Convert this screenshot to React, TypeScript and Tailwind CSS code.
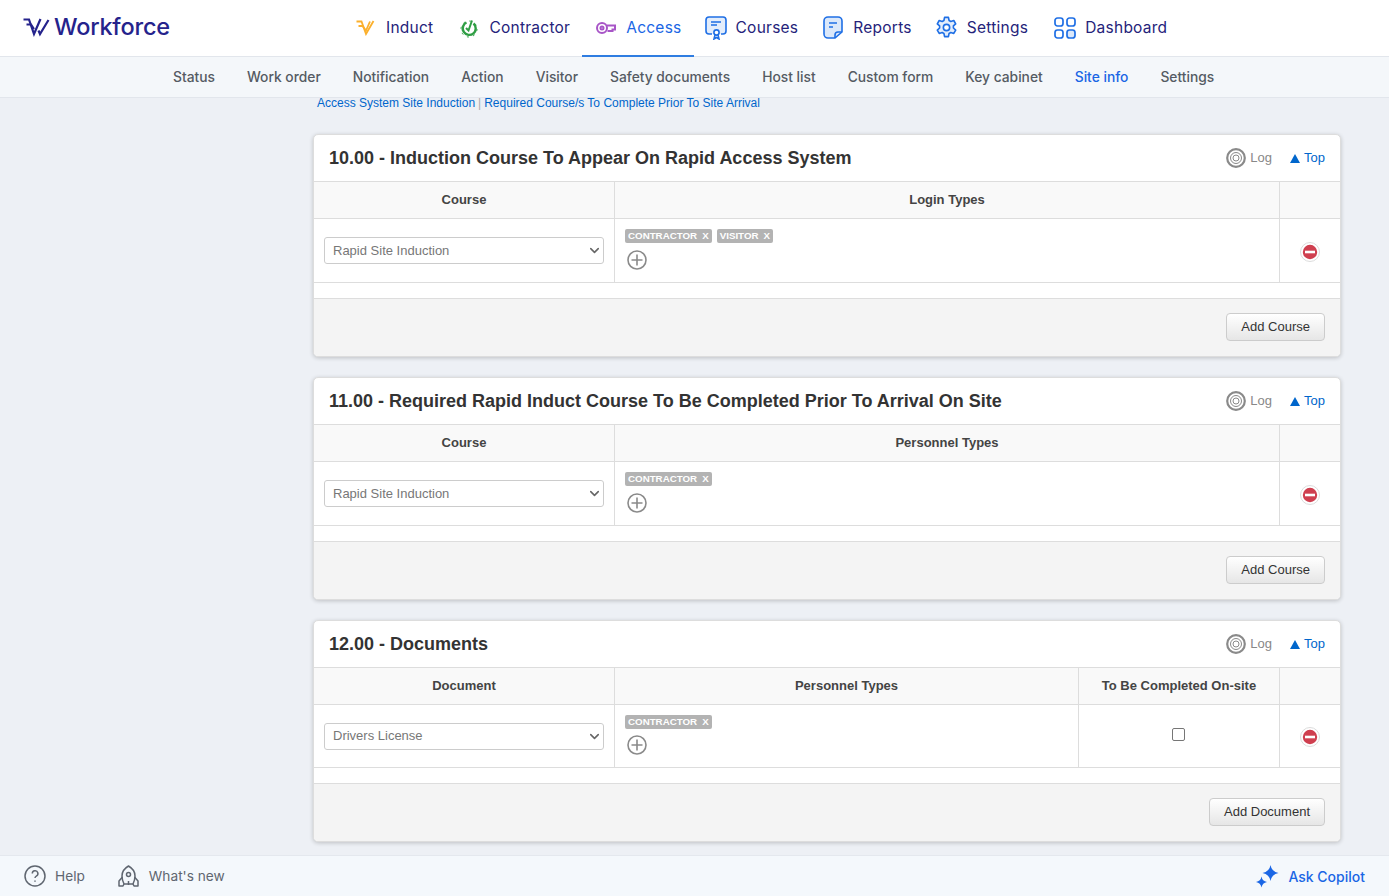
import { ReactNode } from "react";
import { ChevronDown } from "lucide-react";

const sans = "font-['Inter','Noto_Sans',sans-serif]";
const arial = "font-['Liberation_Sans',Arial,sans-serif]";

const InductIcon = () => (
  <svg width="19" height="16" viewBox="0 0 19 16" fill="none" stroke="#fbb02d" strokeWidth="1.800">
    <path d="M0.500 1.500H5.500L10 14 17.500 1" />
    <path d="M2.500 6H6.500L10 10.500 14 1.500" />
  </svg>
);

const ContractorIcon = () => (
  <svg width="20" height="20" viewBox="0 0 20 20" fill="none" stroke="#2f9e44">
    <path d="M7.500 4.500a6.500 6.500 0 1 0 7 1" strokeWidth="2.400" />
    <circle cx="10" cy="11" r="8" strokeWidth="1" strokeDasharray="2 4.300" />
    <path d="M7 10 9.500 12.500 13 2.500" strokeWidth="2" />
  </svg>
);

const AccessIcon = () => (
  <svg width="20" height="14" viewBox="0 0 20 14" fill="none" stroke="#a855c7" strokeWidth="2">
    <circle cx="6" cy="7" r="5" />
    <circle cx="6" cy="7" r="1.500" />
    <path d="M11 4.500h8v4h-2.500v1.500h-5" />
  </svg>
);

const CoursesIcon = () => (
  <svg width="22" height="24" viewBox="0 0 22 24" fill="none" stroke="#1f6fe5" strokeWidth="1.600">
    <path d="M7 18H4a3 3 0 0 1-3-3V4a3 3 0 0 1 3-3h14a3 3 0 0 1 3 3v11a3 3 0 0 1-3 3h-2" fill="#e3edfb" />
    <path d="M6 6h10M6 9h6" />
    <circle cx="11.500" cy="16.500" r="2.600" fill="#fff" />
    <path d="m10 19-1 4 2.500-1.500L14 23l-1-4" />
  </svg>
);

const ReportsIcon = () => (
  <svg width="20" height="23" viewBox="0 0 20 23" fill="none" stroke="#1f6fe5" strokeWidth="1.600">
    <path d="M12 22H5a4 4 0 0 1-4-4V5a4 4 0 0 1 4-4h10a4 4 0 0 1 4 4v11z" fill="#dbe8fa" />
    <path d="M12 22v-3a3 3 0 0 1 3-3h4M6 7h8M6 11h4" />
  </svg>
);

const GearIcon = () => (
  <svg width="23" height="23" viewBox="0 0 24 24" fill="#e3edfb" stroke="#1f6fe5" strokeWidth="1.700" strokeLinejoin="round">
    <path d="M10 1.500h4l.7 3.200 1.800 1 3.100-1 2 3.500-2.400 2.200v2.100l2.400 2.200-2 3.500-3.100-1-1.800 1-.7 3.300h-4l-.7-3.300-1.800-1-3.100 1-2-3.500 2.400-2.200v-2.100L2.400 8.200l2-3.500 3.100 1 1.800-1z" />
    <circle cx="12" cy="12" r="3.300" fill="#fff" />
  </svg>
);

const DashboardIcon = () => (
  <svg width="22" height="22" viewBox="0 0 22 22" fill="none" stroke="#1f6fe5" strokeWidth="1.700">
    <rect x="1" y="1" width="8" height="8" rx="2.500" />
    <rect x="13" y="1" width="8" height="8" rx="2.500" />
    <rect x="1" y="13" width="8" height="8" rx="2.500" />
    <rect x="13" y="13" width="8" height="8" rx="2.500" fill="#dbe8fa" />
  </svg>
);

const WorkforceMark = () => (
  <svg width="27" height="20" viewBox="0 0 27 20" fill="none" stroke="#25238c" strokeWidth="2.200">
    <path d="M0.500 2.500H6L11 17 17.500 2" />
    <path d="M3.500 7.500H8L11 12" />
    <path d="M15.500 13.500 17 17 25.500 3" />
  </svg>
);

const mainNav: { label: string; icon: ReactNode; cls: string; active?: boolean }[] = [
  { label: "Induct", icon: <InductIcon />, cls: "mr-[26px] gap-[11px]" },
  { label: "Contractor", icon: <ContractorIcon />, cls: "mr-[26px] gap-[10px]" },
  { label: "Access", icon: <AccessIcon />, cls: "mr-[11px] -ml-[14px] pr-[12px] pl-[14px] gap-[10px]", active: true },
  { label: "Courses", icon: <CoursesIcon />, cls: "mr-[25px] gap-[9px]" },
  { label: "Reports", icon: <ReportsIcon />, cls: "mr-[23px] gap-[10px]" },
  { label: "Settings", icon: <GearIcon />, cls: "mr-[26px] gap-[9px]" },
  { label: "Dashboard", icon: <DashboardIcon />, cls: "gap-[9px]" },
];

const subNav = ["Status", "Work order", "Notification", "Action", "Visitor", "Safety documents", "Host list", "Custom form", "Key cabinet", "Site info", "Settings"];

const LogIcon = () => (
  <svg width="20" height="20" viewBox="0 0 20 20" fill="none" stroke="#8a8a8a">
    <circle cx="10" cy="10" r="8.800" strokeWidth="2.200" />
    <circle cx="10" cy="10" r="5.500" strokeWidth="1" />
    <circle cx="10" cy="10" r="3" strokeWidth="1" />
  </svg>
);

const RemoveIcon = () => (
  <svg width="20" height="20" viewBox="0 0 20 20">
    <circle cx="10" cy="10" r="9.500" fill="#fff" stroke="#dcdcdc" />
    <circle cx="10" cy="10" r="7.200" fill="#cf3f4f" />
    <rect x="5" y="8.700" width="10" height="2.600" fill="#fff" />
  </svg>
);

const AddIcon = () => (
  <svg width="20" height="20" viewBox="0 0 20 20" fill="none" stroke="#8a8a8a" strokeWidth="1.600">
    <circle cx="10" cy="10" r="9" />
    <path d="M10 4.500v11M4.500 10h11" />
  </svg>
);

const Tag = ({ label }: { label: string }) => (
  <span className="inline-flex h-[14px] items-center gap-[5px] rounded-[2px] bg-[#b3b3b3] px-[3px] text-[9.750px] leading-none font-bold text-white">
    {label}
    <span>X</span>
  </span>
);

type Section = {
  title: string;
  first: string;
  second: string;
  value: string;
  tags: string[];
  button: string;
  onsite?: boolean;
};

const sections: Section[] = [
  { title: "10.00 - Induction Course To Appear On Rapid Access System", first: "Course", second: "Login Types", value: "Rapid Site Induction", tags: ["CONTRACTOR", "VISITOR"], button: "Add Course" },
  { title: "11.00 - Required Rapid Induct Course To Be Completed Prior To Arrival On Site", first: "Course", second: "Personnel Types", value: "Rapid Site Induction", tags: ["CONTRACTOR"], button: "Add Course" },
  { title: "12.00 - Documents", first: "Document", second: "Personnel Types", value: "Drivers License", tags: ["CONTRACTOR"], button: "Add Document", onsite: true },
];

const SectionCard = ({ section }: { section: Section }) => {
  const cols = section.onsite ? "grid-cols-[301px_464px_201px_1fr]" : "grid-cols-[301px_665px_1fr]";
  const headCell = "flex items-center justify-center border-r border-[#dddddd] text-[13px] font-bold text-[#444444]";

  return (
    <div className={`overflow-hidden rounded-[5px] border border-[#dddddd] bg-white shadow-[0_1px_4px_rgba(0,0,0,0.2)] ${arial}`}>
      <div className="flex h-[47px] items-center justify-between border-b border-[#dddddd] pr-[15px] pl-[15px]">
        <h2 className="text-[18px] font-bold text-[#333333]">{section.title}</h2>
        <div className="flex items-center text-[13px]">
          <LogIcon />
          <span className="ml-[4px] text-[#888888]">Log</span>
          <svg className="mr-[4px] ml-[18px]" width="10" height="9" viewBox="0 0 10 9" fill="#0066cc">
            <path d="M5 0 10 9H0z" />
          </svg>
          <span className="text-[#0066cc]">Top</span>
        </div>
      </div>

      <div className={`grid h-[37px] border-b border-[#dddddd] bg-[#f9f9f9] ${cols}`}>
        <div className={headCell}>{section.first}</div>
        <div className={headCell}>{section.second}</div>
        {section.onsite && <div className={headCell}>To Be Completed On-site</div>}
        <div />
      </div>

      <div className={`grid border-b border-[#dddddd] ${section.onsite ? "h-[63px]" : "h-[64px]"} ${cols}`}>
        <div className="flex items-center border-r border-[#dddddd] px-[10px]">
          <div className="flex h-[27px] w-full items-center justify-between rounded-[3px] border border-[#cccccc] bg-white pr-[1px] pl-[8px] text-[13px] text-[#777777]">
            {section.value}
            <ChevronDown size={15} strokeWidth={2.500} className="text-[#666666]" />
          </div>
        </div>
        <div className="border-r border-[#dddddd] pt-[10px] pl-[10px]">
          <div className="flex gap-[5px]">
            {section.tags.map((tag) => (
              <Tag key={tag} label={tag} />
            ))}
          </div>
          <div className={`ml-[2px] ${section.onsite ? "mt-[6px]" : "mt-[7px]"}`}>
            <AddIcon />
          </div>
        </div>
        {section.onsite && (
          <div className="flex justify-center border-r border-[#dddddd] pt-[23px] pr-[2px]">
            <div className="h-[13px] w-[13px] rounded-[2px] border border-[#767676] bg-white" />
          </div>
        )}
        <div className="flex items-center justify-center pt-[2px]">
          <RemoveIcon />
        </div>
      </div>

      <div className="h-[16px] border-b border-[#dddddd]" />

      <div className="flex h-[57px] items-start justify-end bg-[#f4f4f4] pt-[14px] pr-[15px]">
        <button className="h-[28px] rounded-[4px] border border-[#cccccc] bg-gradient-to-b from-white to-[#e6e6e6] px-[14px] pb-[2px] text-[13px] leading-none text-[#333333]">
          {section.button}
        </button>
      </div>
    </div>
  );
};

export default function App() {
  return (
    <div className={`flex h-screen flex-col overflow-hidden bg-[#edf0f5] ${sans}`}>
      <header className="relative flex h-[57px] shrink-0 border-b border-[#e2e6ec] bg-white">
        <div className="absolute top-[14px] left-[23px] flex items-center gap-[4px]">
          <WorkforceMark />
          <span className="text-[23.500px] leading-[26px] font-medium tracking-[-0.2px] text-[#25238c]">Workforce</span>
        </div>
        <nav className="ml-[356px] flex">
          {mainNav.map((item) => (
            <div
              key={item.label}
              className={`flex h-[57px] items-center border-b-2 text-[15.500px] tracking-[0.25px] ${item.cls} ${
                item.active ? "border-[#2f7de1] text-[#1a66e5]" : "border-transparent text-[#25237a]"
              }`}
            >
              {item.icon}
              {item.label}
            </div>
          ))}
        </nav>
      </header>

      <div className="flex h-[41px] shrink-0 items-center gap-[32px] border-b border-[#e2e6ec] bg-[#f4f7fa] pl-[173px] text-[13.800px] font-medium">
        {subNav.map((item, i) => (
          <span key={i} className={item === "Site info" ? "text-[#1a66e5]" : "text-[#555b63]"}>
            {item}
          </span>
        ))}
      </div>

      <main className="min-h-0 flex-1 pr-[48px] pl-[313px]">
        <div className={`h-[36px] pl-[4px] text-[12px] leading-[10px] text-[#0066cc] ${arial}`}>
          Access System Site Induction
          <span className="mx-[3px] text-[#aaaaaa]">|</span>
          Required Course/s To Complete Prior To Site Arrival
        </div>
        <div className="flex flex-col gap-[20px]">
          {sections.map((section) => (
            <SectionCard key={section.title} section={section} />
          ))}
        </div>
      </main>

      <footer className="flex h-[41px] shrink-0 items-center justify-between border-t border-[#e4e8ee] bg-[#f4f8fc] pr-[24px] pl-[24px] text-[13.700px] text-[#5f6670]">
        <div className="flex items-center">
          <svg width="22" height="22" viewBox="0 0 22 22" fill="none" stroke="#5f6670" strokeWidth="1.500">
            <circle cx="11" cy="11" r="10" />
            <path d="M8.300 8.500a2.800 2.800 0 1 1 4 2.600c-.9.500-1.300 1-1.300 2" />
            <path d="M11 15.500v1.300" />
          </svg>
          <span className="ml-[9px]">Help</span>
          <svg className="ml-[32px]" width="23" height="23" viewBox="0 0 23 23" fill="none" stroke="#5f6670" strokeWidth="1.500" strokeLinejoin="round">
            <path d="M7 19c-1.500-3-2-5-2-8 0-4 3-8 6.500-10C15 3 18 7 18 11c0 3-.5 5-2 8z" />
            <circle cx="11.500" cy="9.500" r="2" />
            <path d="M5.500 12 2 16v5h4l1-2M17.500 12l3.500 4v5h-4l-1-2M11.500 16v4" />
          </svg>
          <span className="ml-[9px]">What's new</span>
        </div>
        <div className="flex items-center gap-[9px] text-[14px] font-medium text-[#1a66e5]">
          <svg width="23" height="23" viewBox="0 0 23 23" fill="#1a66e5">
            <path d="M14.500 0Q15.500 6.500 22.500 8Q15.500 9.500 14.500 16Q13.500 9.500 6.500 8Q13.500 6.500 14.500 0z" />
            <path d="M5.500 11.500Q6.300 16.200 11 17Q6.300 17.800 5.500 22.500Q4.700 17.800 0 17Q4.700 16.200 5.500 11.500z" />
          </svg>
          Ask Copilot
        </div>
      </footer>
    </div>
  );
}
